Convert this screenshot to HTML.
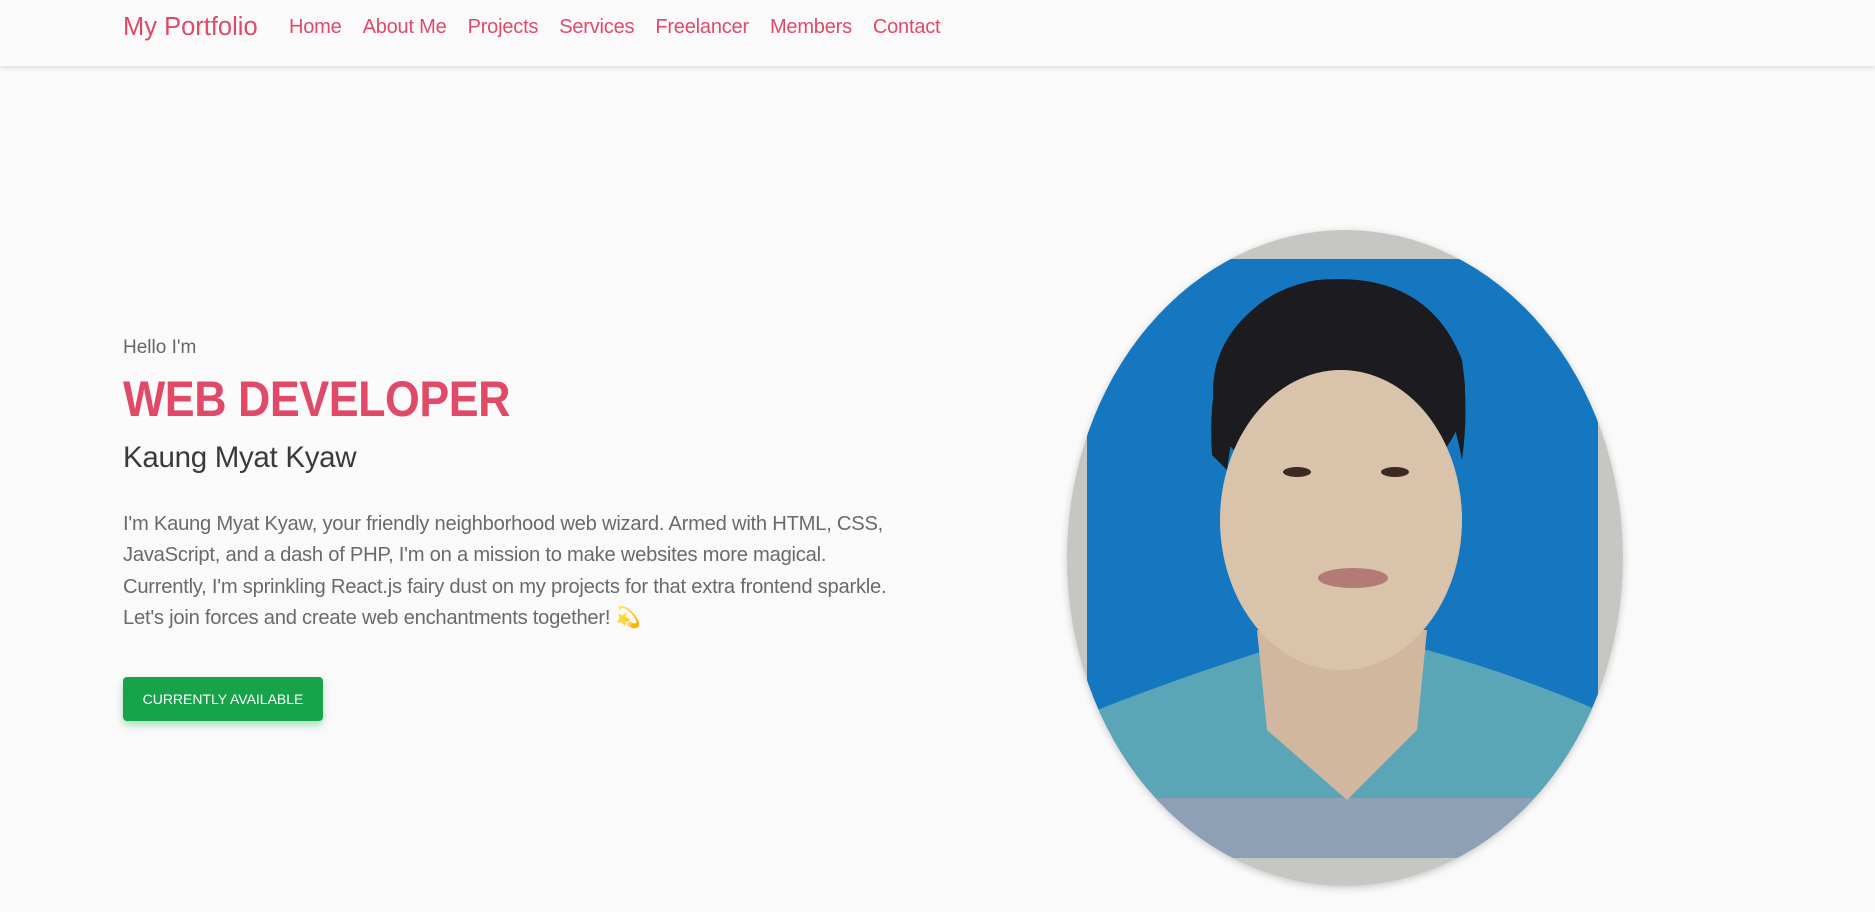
<!DOCTYPE html>
<html><head><meta charset="utf-8"><style>
*{margin:0;padding:0;box-sizing:border-box}
body{width:1875px;height:912px;background:#fafafa;font-family:"Liberation Sans",sans-serif;overflow:hidden;position:relative}
.nav{position:absolute;left:0;top:0;width:1875px;height:66px;background:#fafafa;box-shadow:0 2px 5px rgba(0,0,0,.12)}
.brand{position:absolute;left:123px;top:13px;font-size:25.5px;color:#e04a68}
.links{position:absolute;left:289px;top:16px;font-size:20px;color:#e04a68;display:flex;gap:21px;letter-spacing:-.2px}
.hello{position:absolute;left:123px;top:337px;font-size:19px;color:#666}
h1{position:absolute;left:123px;top:370px;font-size:50px;font-weight:bold;color:#e04a68;letter-spacing:-.5px;transform:scaleX(.895);transform-origin:left;white-space:nowrap}
h2{position:absolute;left:123px;top:441px;font-size:29.5px;font-weight:normal;color:#3a3a3a;letter-spacing:-.3px}
p{position:absolute;left:123px;top:509px;width:900px;font-size:20.2px;line-height:31.3px;color:#6a6a6a;letter-spacing:-.25px}
.btn{position:absolute;left:123px;top:677px;width:200px;height:44px;background:#16a34a;color:#fff;font-size:14px;border-radius:4px;text-align:center;line-height:44px;box-shadow:0 4px 8px rgba(22,163,74,.35)}
.photo{position:absolute;left:1067px;top:230px;width:556px;height:656px;border-radius:50%;overflow:hidden;box-shadow:0 2px 8px rgba(0,0,0,.2)}
</style></head><body>
<div class="nav"><div class="brand">My Portfolio</div>
<div class="links"><span>Home</span><span>About Me</span><span>Projects</span><span>Services</span><span>Freelancer</span><span>Members</span><span>Contact</span></div></div>
<div class="hello">Hello I'm</div>
<h1>WEB DEVELOPER</h1>
<h2>Kaung Myat Kyaw</h2>
<p>I'm Kaung Myat Kyaw, your friendly neighborhood web wizard. Armed with HTML, CSS,<br>JavaScript, and a dash of PHP, I'm on a mission to make websites more magical.<br>Currently, I'm sprinkling React.js fairy dust on my projects for that extra frontend sparkle.<br>Let's join forces and create web enchantments together! 💫</p>
<div class="btn">CURRENTLY AVAILABLE</div>
<div class="photo"><svg width="556" height="656" viewBox="0 0 556 656">
<rect width="556" height="656" fill="#c6c6c2"/>
<rect x="20" y="29" width="511" height="560" fill="#1577c0"/>
<path d="M30 480 Q120 445 200 420 L360 420 Q450 445 530 480 L540 600 L20 600 Z" fill="#5aa6b6"/>
<rect x="20" y="568" width="520" height="60" fill="#8ea0b6"/>
<path d="M190 400 L360 400 L350 500 L280 570 L200 500 Z" fill="#d2b7a0"/>
<ellipse cx="272" cy="160" rx="126" ry="110" fill="#1c1c20"/>
<ellipse cx="274" cy="290" rx="121" ry="150" fill="#d9c3ab"/>
<path d="M145 225 Q135 70 250 50 Q360 40 395 130 Q402 180 395 230 Q380 150 350 130 Q270 110 200 135 Q170 160 160 240 Z" fill="#1c1c20"/>
<ellipse cx="230" cy="242" rx="14" ry="5" fill="#3a2a22"/><ellipse cx="328" cy="242" rx="14" ry="5" fill="#3a2a22"/>
<ellipse cx="286" cy="348" rx="35" ry="10" fill="#b47a78"/>
</svg></div>
</body></html>
